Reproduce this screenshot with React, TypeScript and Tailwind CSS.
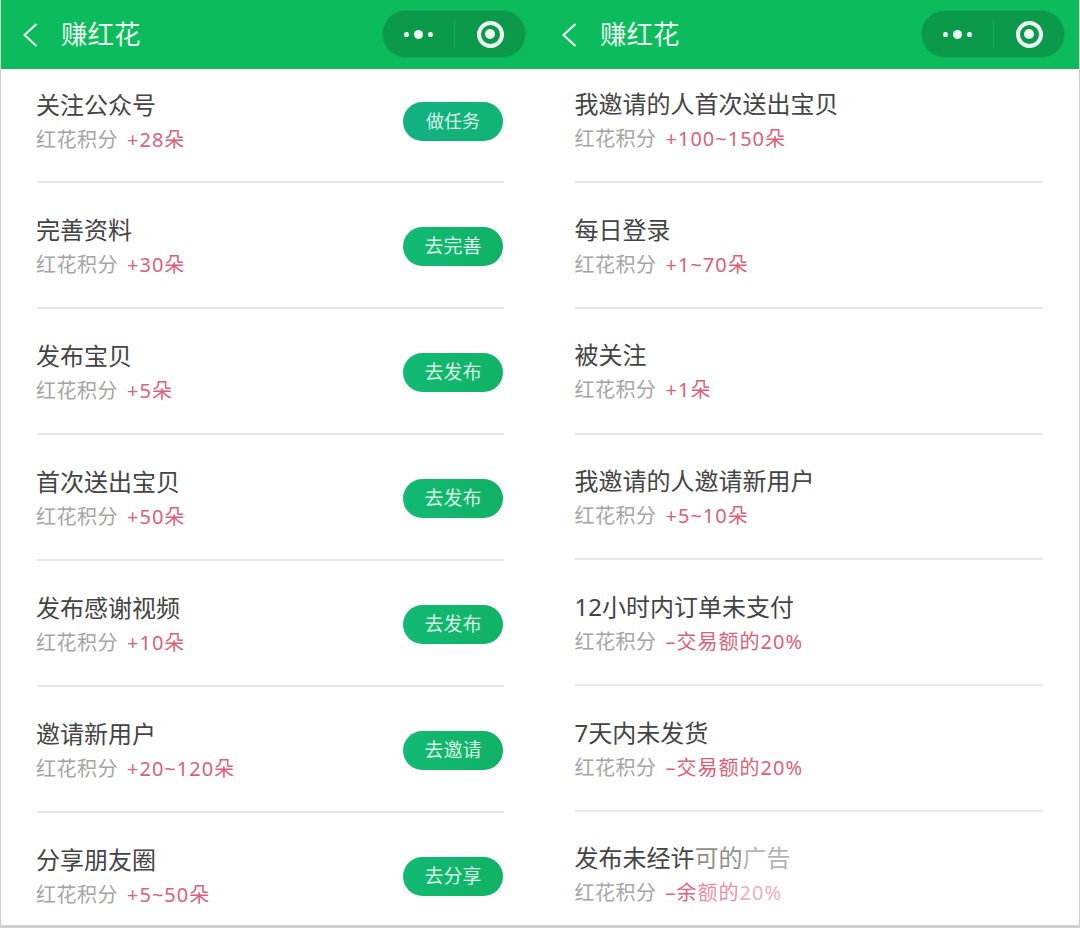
import React from "react";

interface Task {
  title: React.ReactNode;
  score: React.ReactNode;
  action?: string;
}

const leftTasks: Task[] = [
  { title: "关注公众号", score: "+28朵", action: "做任务" },
  { title: "完善资料", score: "+30朵", action: "去完善" },
  { title: "发布宝贝", score: "+5朵", action: "去发布" },
  { title: "首次送出宝贝", score: "+50朵", action: "去发布" },
  { title: "发布感谢视频", score: "+10朵", action: "去发布" },
  { title: "邀请新用户", score: "+20~120朵", action: "去邀请" },
  { title: "分享朋友圈", score: "+5~50朵", action: "去分享" },
];

const rightTasks: Task[] = [
  { title: "我邀请的人首次送出宝贝", score: "+100~150朵" },
  { title: "每日登录", score: "+1~70朵" },
  { title: "被关注", score: "+1朵" },
  { title: "我邀请的人邀请新用户", score: "+5~10朵" },
  { title: "12小时内订单未支付", score: "–交易额的20%" },
  { title: "7天内未发货", score: "–交易额的20%" },
  {
    title: (
      <>
        发布未经许<span className="opacity-60">可的</span>
        <span className="opacity-40">广告</span>
      </>
    ),
    score: (
      <>
        –余<span className="opacity-70">额的</span>
        <span className="opacity-50">20%</span>
      </>
    ),
  },
];

const Header = () => (
  <div className="h-[69px] shrink-0 bg-[#0cbb5b] flex items-center pl-[21px] pr-[14px]">
    <svg width="16" height="26" viewBox="0 0 16 26" fill="none" className="shrink-0">
      <path d="M14.5 2 L2.5 13 L14.5 24" stroke="#e6f8ee" strokeWidth="2.2" />
    </svg>
    <span className="ml-[23px] text-[26.5px] leading-none text-[#e6f8ee]">赚红花</span>
    <div className="ml-auto w-[144px] h-[48px] mb-[1px] rounded-full bg-[#0a9a4a] border border-[#12ab58] flex items-center">
      <div className="w-[71px] flex items-center justify-center gap-[5px]">
        <span className="w-[5px] h-[5px] rounded-full bg-[#eefaf3]" />
        <span className="w-[9px] h-[9px] rounded-full bg-[#eefaf3]" />
        <span className="w-[5px] h-[5px] rounded-full bg-[#eefaf3]" />
      </div>
      <div className="w-px h-[28px] bg-[#1aad5e]" />
      <div className="flex-1 flex items-center justify-center">
        <div className="w-[27px] h-[27px] rounded-full border-[4px] border-[#eefaf3] flex items-center justify-center">
          <span className="w-[10px] h-[10px] rounded-full bg-[#eefaf3]" />
        </div>
      </div>
    </div>
  </div>
);

const Row = ({ task, first, last, tall }: { task: Task; first: boolean; last: boolean; tall: boolean }) => {
  let spacing = "pt-[31.5px] pb-[28.25px]";
  if (tall) spacing = first ? "pt-[21px] pb-[27px]" : "pt-[32px] pb-[28px]";
  else if (first) spacing = "pt-[20px] pb-[28px]";

  return (
    <div
      className={`flex items-center justify-between border-[#e8e8ec] ${last ? "" : "border-b-2"} ${spacing}`}
    >
      <div className={tall ? "-ml-px" : ""}>
        <div className="text-[24px] leading-[30px] text-[#444444]">{task.title}</div>
        <div className="mt-[6px] flex text-[20px] leading-[28px]">
          <span className="text-[#a5a5a5] tracking-[0.5px]">红花积分</span>
          <span className="ml-[9px] text-[#dd5f78] tracking-[1px]">{task.score}</span>
        </div>
      </div>
      {task.action && (
        <button
          className={`w-[100px] h-[39px] mt-[-2px] mr-[1px] rounded-full bg-gradient-to-r text-[#d8f5e6] ${
            first ? "from-[#14b084] to-[#10b472] text-[18px]" : "from-[#12ba74] to-[#11b264] text-[19px]"
          }`}
        >
          {task.action}
        </button>
      )}
    </div>
  );
};

const Column = ({ tasks, inset, tall }: { tasks: Task[]; inset: string; tall: boolean }) => (
  <div className="flex-1 flex flex-col min-w-0">
    <Header />
    <div className={inset}>
      {tasks.map((t, i) => (
        <Row key={i} task={t} first={i === 0} last={i === tasks.length - 1} tall={tall} />
      ))}
    </div>
  </div>
);

export default function App() {
  return (
    <div
      className="w-[1080px] h-[928px] overflow-hidden bg-white flex border-l border-r border-[#d0d0d0] border-b-[3px]"
      style={{ fontFamily: '"Noto Sans", "Noto Sans CJK SC", sans-serif' }}
    >
      <Column tasks={leftTasks} inset="pl-[36px] pr-[36px]" tall />
      <Column tasks={rightTasks} inset="pl-[34.5px] pr-[36px]" tall={false} />
    </div>
  );
}
